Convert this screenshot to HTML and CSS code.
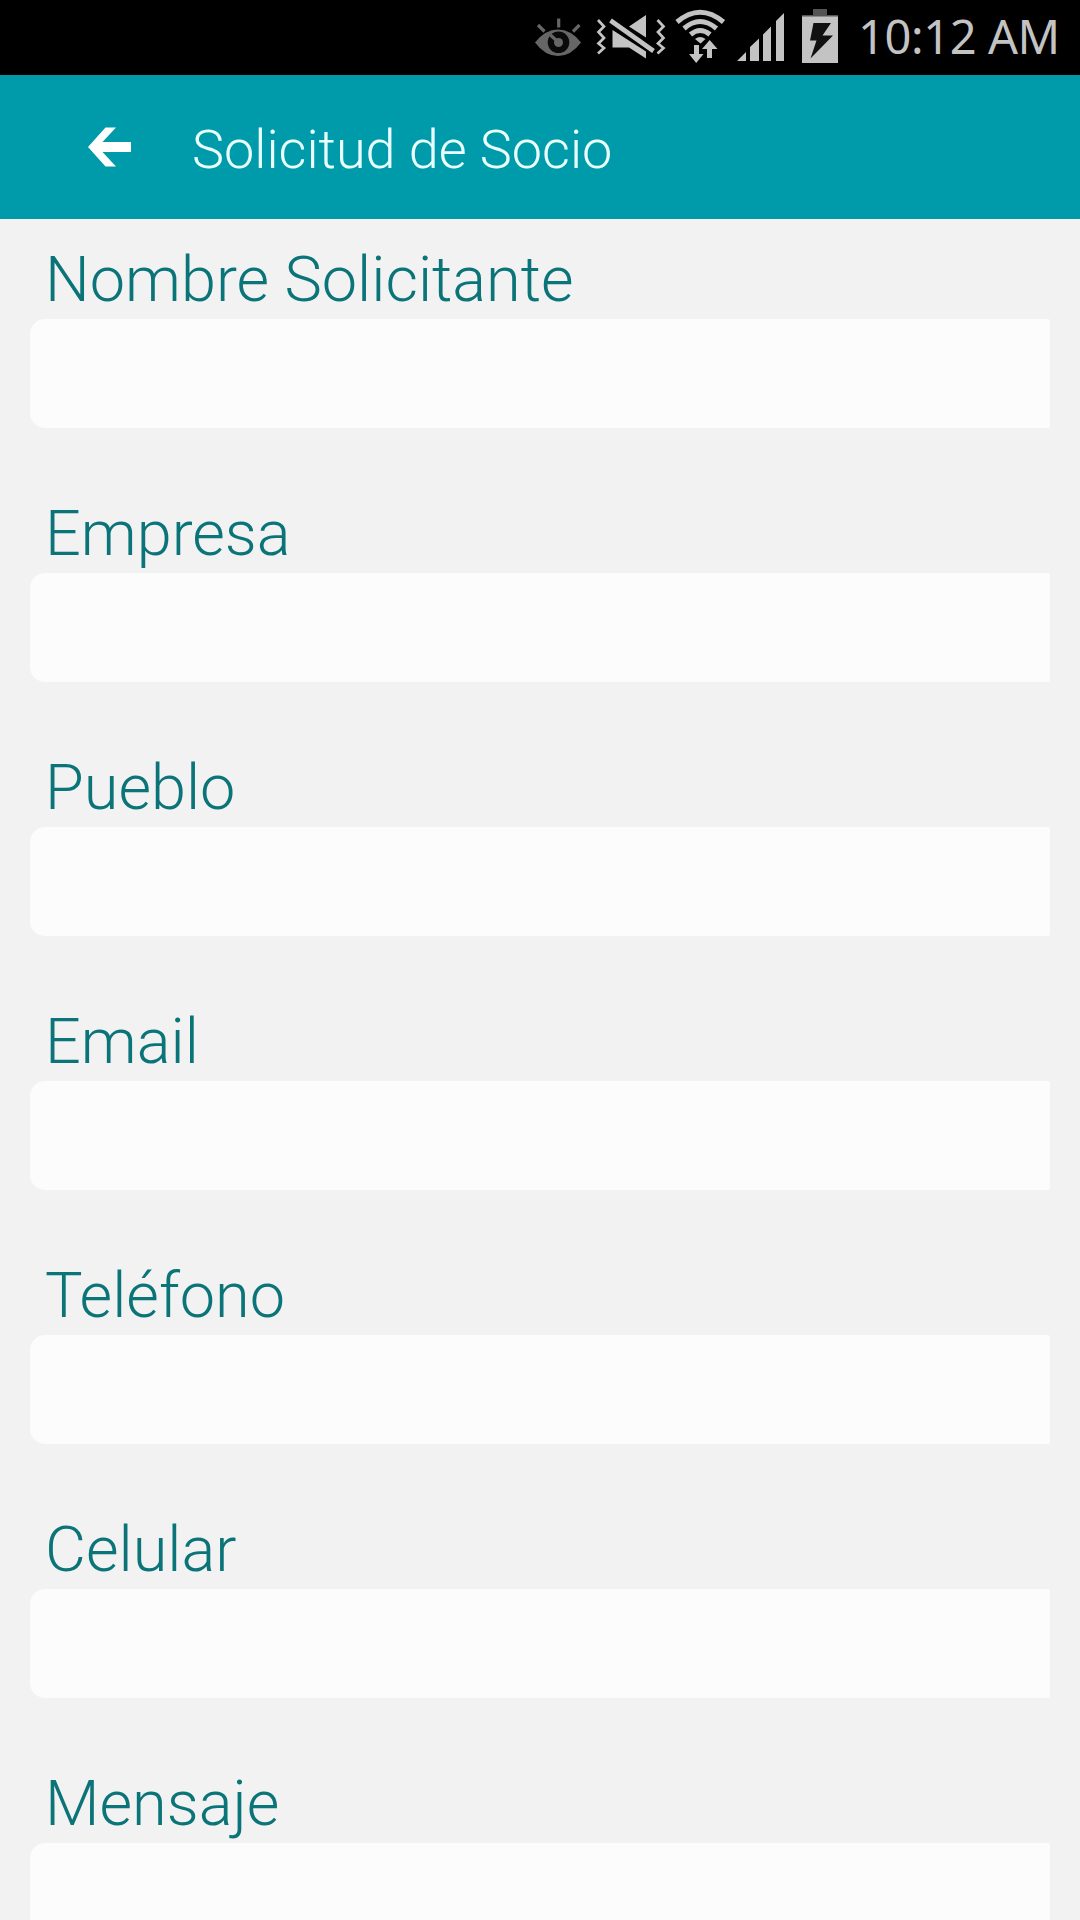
FILE: index.html
```html
<!DOCTYPE html>
<html lang="es">
<head>
  <meta charset="UTF-8" />
  <meta name="viewport" content="width=device-width, initial-scale=1" />
  <title>Solicitud de Socio</title>
  <link rel="stylesheet" href="styles.css">
</head>
<body>

<div class="status-bar">
  <svg class="status-icons" width="320" height="75" viewBox="520 0 320 75" fill="#c3c3c3">
    <!-- smart stay -->
    <g fill="none" stroke="#666">
      <path d="M535 42.500Q545 29.500 558 29.500Q571 29.500 581 42.500Q571 56 558 56Q545 56 535 42.500Z" fill="#666" stroke="none" />
      <circle cx="558.500" cy="42.300" r="10.800" fill="#0a0a0a" stroke="none" />
      <circle cx="558.500" cy="42.500" r="4.500" fill="#666" stroke="none" />
      <path d="M550.500 35L558 42" stroke-width="3.200" />
      <path d="M558.700 18.500V27.500M538 25L544.500 31.500M579.500 25L573 31.500" stroke-width="3.200" />
    </g>
    <!-- muted, vibrate -->
    <path d="M646 15V37.500L629 26.500ZM612.500 30L646 51.500V58.500L629 47.500H612.500Z" />
    <path d="M610.500 20.500L653.500 51" fill="none" stroke="#c3c3c3" stroke-width="4.600" />
    <path d="M598 20L604 26.500L598.500 32L604 38L598.500 43.500L604 48L598 53.500M657.500 20L663.500 26.500L658 32L663.500 38L658 43.500L663.500 48L657.500 53.500" fill="none" stroke="#c3c3c3" stroke-width="2.700" />
    <!-- wifi -->
    <g fill="none" stroke="#c3c3c3" stroke-width="5">
      <path d="M677 22Q700 2.500 723.500 22" />
      <path d="M684 28.500Q700 14.500 716.500 28.500" />
      <path d="M690.500 34.500Q700 26.500 710 34.500" />
    </g>
    <path d="M695 39Q700 35 705.500 39L700.500 43.500Z" />
    <path d="M694 45H699V54H703.500L696.200 63L689 54H694ZM707 58H712V49H717.500L709.700 40L702 49H707Z" />
    <!-- signal -->
    <path d="M737 61L746 52V61ZM750 61V47L759 38.500V61ZM763 61V34.500L771 26.500V61ZM776 61V21L784 13V61Z" />
    <!-- battery charging -->
    <path d="M813 9H827V15H838V17H802V15H813Z" fill="#555" />
    <path d="M802 16.500H838V63H802Z" />
    <path d="M813.500 23H831L822.500 35.500H833L810.500 58.500L816.500 40.500H810Z" fill="#111" />
  </svg>
  <span class="clock">10:12 AM</span>
</div>

<header>
  <a href="#" class="back" aria-label="Volver">
    <svg width="44" height="40" viewBox="0 0 44 40">
      <path d="M0 20L17.500 0.500H28L14.500 15H43V25H14.500L28 39.500H17.500Z" fill="#fff" />
    </svg>
  </a>
  <h1>Solicitud de Socio</h1>
</header>

<form>
  <label for="nombre">Nombre Solicitante</label>
  <input type="text" id="nombre" />
  <label for="empresa">Empresa</label>
  <input type="text" id="empresa" />
  <label for="pueblo">Pueblo</label>
  <input type="text" id="pueblo" />
  <label for="email">Email</label>
  <input type="email" id="email" />
  <label for="telefono">Teléfono</label>
  <input type="tel" id="telefono" />
  <label for="celular">Celular</label>
  <input type="tel" id="celular" />
  <label for="mensaje">Mensaje</label>
  <input type="text" id="mensaje" />
</form>

</body>
</html>
```
FILE: styles.css
```css
* {
  box-sizing: border-box;
}
body {
  font-family: Roboto, sans-serif;
  font-weight: 300;
  margin: 0;
  height: 1920px;
  overflow: hidden;
  background: #f2f2f2;
}
.status-bar {
  display: flex;
  justify-content: flex-end;
  align-items: center;
  height: 75px;
  padding-right: 21px;
  background: #000;
}
.clock {
  width: 219px;
  height: 75px;
  padding-left: 18px;
  font-family: "Noto Sans", sans-serif;
  font-size: 47px;
  font-weight: 400;
  line-height: 73px;
  letter-spacing: -0.4px;
  white-space: nowrap;
  color: #c3c3c3;
}
header {
  display: flex;
  align-items: center;
  height: 144px;
  padding-left: 88px;
  background: #009baa;
}
.back {
  display: flex;
  margin-right: 60px;
}
h1 {
  margin: 0;
  padding-top: 5px;
  font-size: 54px;
  font-weight: 300;
  line-height: 64px;
  color: #eaffff;
}
form {
  padding: 26px 30px 0;
}
label {
  display: block;
  height: 74px;
  padding-left: 15px;
  font-size: 63px;
  line-height: 70px;
  color: #0b7479;
}
input {
  display: block;
  width: 100%;
  height: 109px;
  margin-bottom: 71px;
  padding: 0 15px;
  border: none;
  border-radius: 15px 2px 2px 15px;
  background: #fcfcfc;
  font: inherit;
  font-size: 54px;
  outline: none;
}
#mensaje {
  height: 77px;
  margin-bottom: 0;
  border-radius: 15px 2px 0 0;
}
```
